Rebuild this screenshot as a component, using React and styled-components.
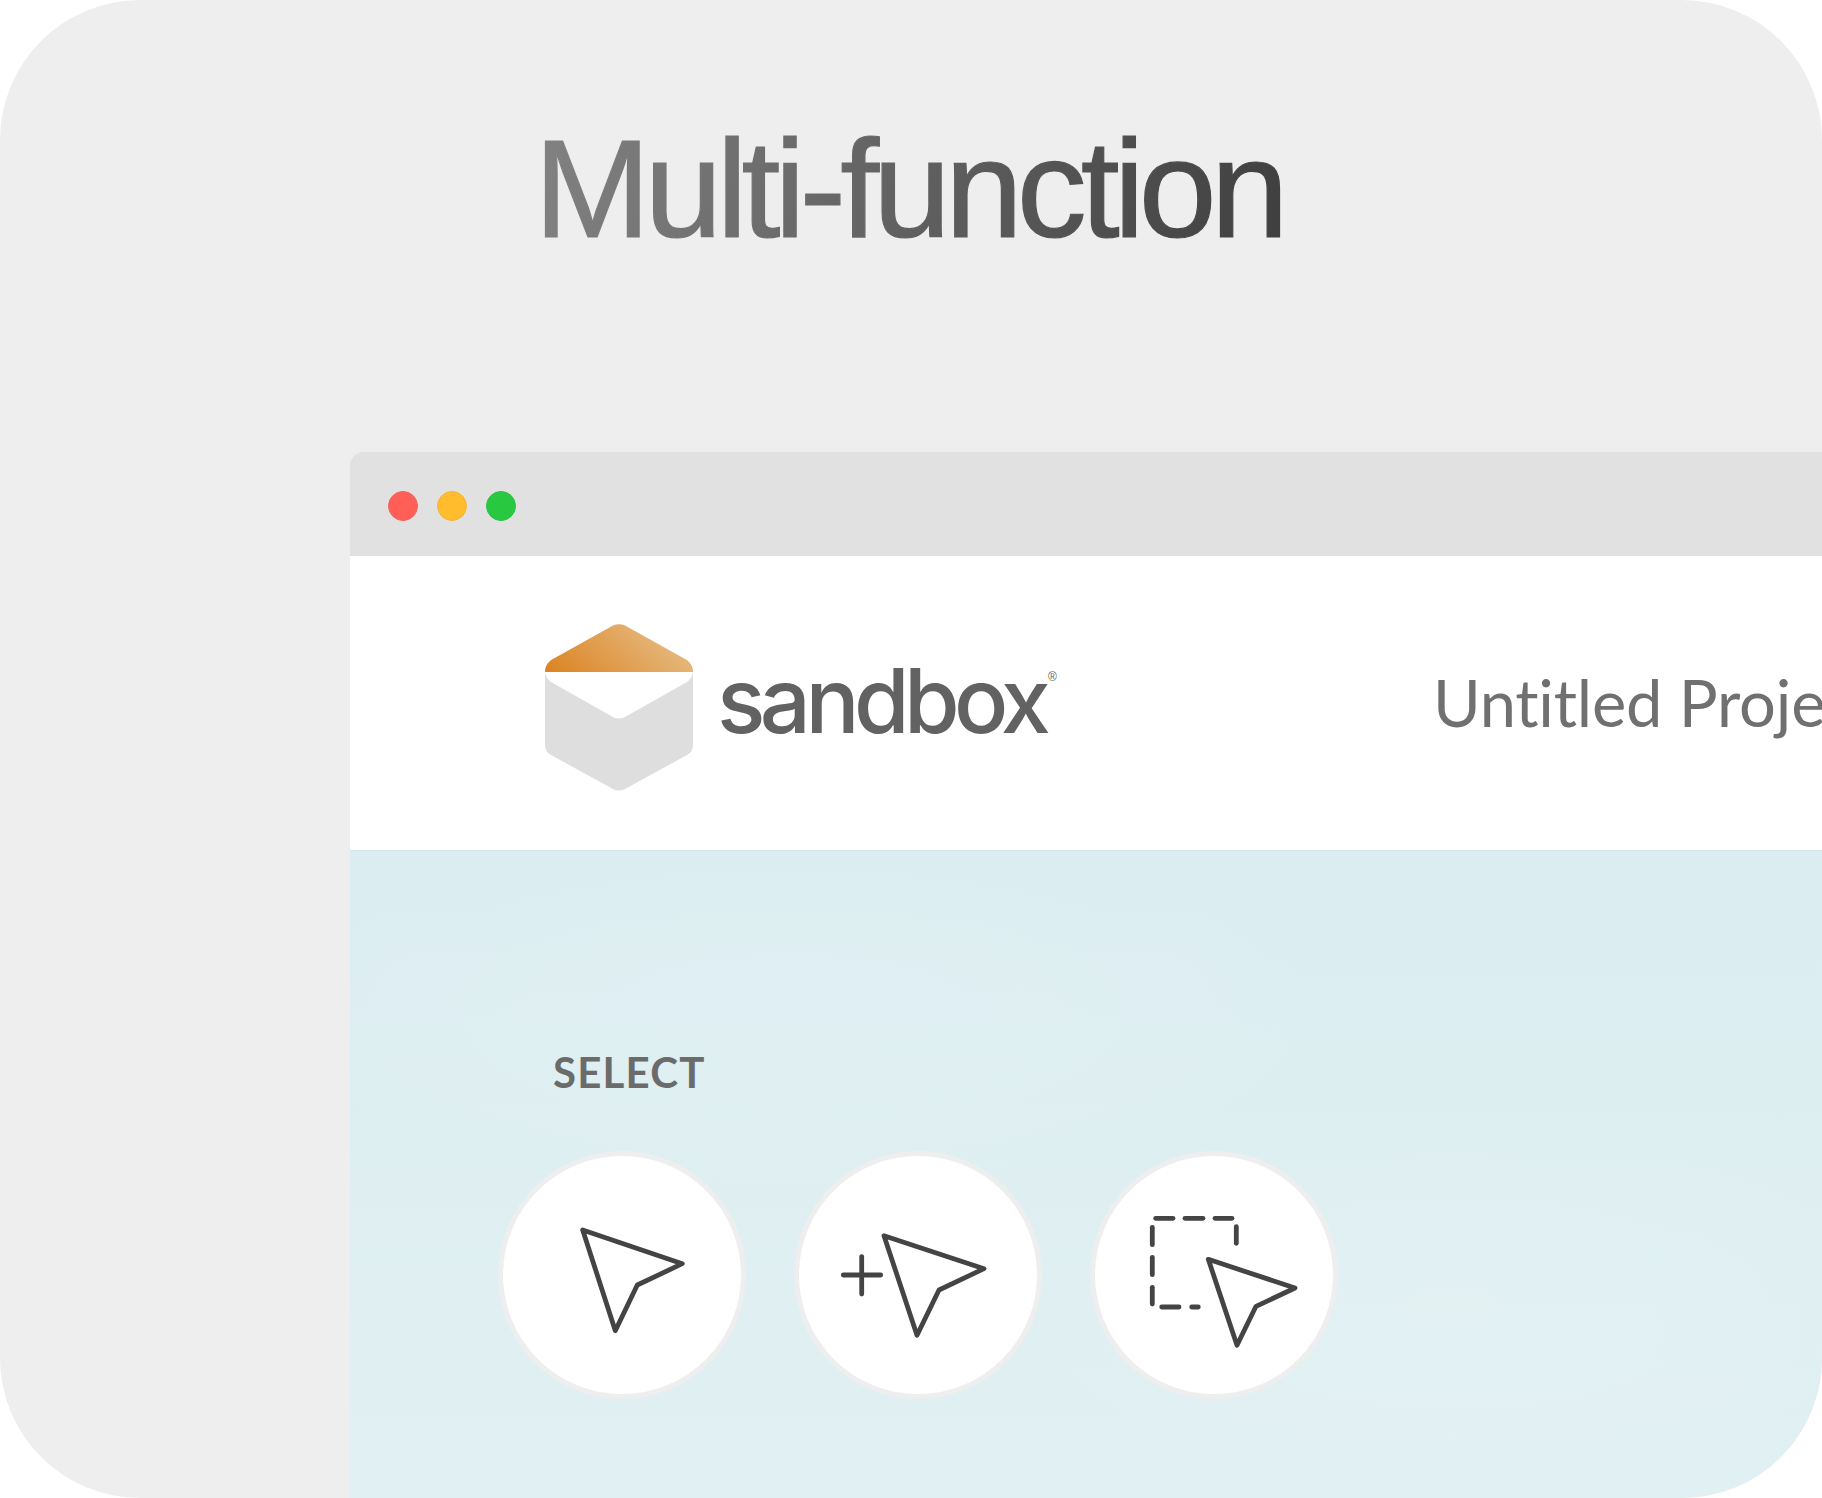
import React from "react";
import styled, { createGlobalStyle } from "styled-components";

const Global = createGlobalStyle`
  html, body { margin: 0; padding: 0; background: #fff; }
  #root { width: 1822px; height: 1498px; }
`;

const Card = styled.main`
  box-sizing: border-box;
  width: 1822px;
  height: 1498px;
  padding-top: 117px;
  background: #eeeeee;
  border-radius: 140px;
  overflow: hidden;
  display: flex;
  flex-direction: column;
`;

const Title = styled.h1`
  margin: 0 0 191px 534px;
  align-self: flex-start;
  font: 400 140px/144px "Liberation Sans", Arial, sans-serif;
  letter-spacing: -6px;
  white-space: nowrap;
  background: linear-gradient(100deg, #828282 0%, #3f3f3f 100%);
  -webkit-background-clip: text;
  background-clip: text;
  color: transparent;
  -webkit-text-stroke: 1.2px transparent;
`;

const Win = styled.section`
  margin-left: 350px;
  flex: 1;
  min-height: 0;
  display: flex;
  flex-direction: column;
  border-top-left-radius: 14px;
  overflow: hidden;
`;

const TitleBar = styled.div`
  box-sizing: border-box;
  height: 104px;
  flex: none;
  padding: 3px 0 0 38px;
  display: flex;
  align-items: center;
  gap: 19px;
  background: #e1e1e1;
`;

const Dot = styled.span`
  box-sizing: border-box;
  width: 30px;
  height: 30px;
  border-radius: 50%;
  background: ${(p) => p.$c};
  border: 1px solid ${(p) => p.$b};
`;

const Header = styled.header`
  box-sizing: border-box;
  height: 295px;
  flex: none;
  padding: 68px 0 0 195px;
  display: flex;
  align-items: flex-start;
  background: #fff;
  border-bottom: 1px solid #d6e6e9;
  white-space: nowrap;
`;

const Logo = styled.svg`
  display: block;
  flex: none;
  width: 148px;
  height: 167px;
`;

const Word = styled.div`
  position: relative;
  flex: none;
  width: 340px;
  margin: 25px 0 0 24px;
  font: 500 90px/104px Inter, "Liberation Sans", sans-serif;
  letter-spacing: -5.6px;
  color: #626262;
`;

const Reg = styled.span`
  position: absolute;
  left: 331px;
  top: 22px;
  font: 400 12px/12px "Liberation Sans", Arial, sans-serif;
  letter-spacing: 0;
`;

const Project = styled.div`
  flex: none;
  margin: 39px 0 0 376px;
  font: 400 65px/78px Lato, sans-serif;
  font-variant-ligatures: none;
  letter-spacing: -0.2px;
  color: #707070;
`;

const Body = styled.div`
  flex: 1;
  min-height: 0;
  padding: 196px 0 0 148px;
  background:
    radial-gradient(600px 200px at 30% 25%, rgba(255,255,255,.10), transparent),
    radial-gradient(500px 200px at 75% 70%, rgba(255,255,255,.10), transparent),
    linear-gradient(180deg, #dbedf1 0%, #e1f0f2 100%);
`;

const Label = styled.div`
  margin-left: 55px;
  font: 700 42px/50px Lato, sans-serif;
  letter-spacing: 1.2px;
  color: #6b6b6b;
`;

const Tools = styled.div`
  margin-top: 54px;
  display: flex;
  gap: 48px;
`;

const Tool = styled.div`
  box-sizing: border-box;
  width: 248px;
  height: 248px;
  border-radius: 50%;
  border: 5px solid #eeeeee;
  background: #fff;
  flex: none;
`;

const Glyph = styled.svg`
  display: block;
  width: 238px;
  height: 238px;
  fill: none;
  stroke: #444444;
  stroke-width: 4.8px;
  stroke-linecap: round;
  stroke-linejoin: round;
`;

const ICONS = [
  ["M83.7 78 183.3 111.7 138.3 133 116.3 178.7Z"],
  [
    "M89 83.7 189 116.7 144 138 122 183.3Z",
    "M48.3 123H85.7",
    "M66.7 104.7V142",
  ],
  [
    "M117.3 107.3 204 136 165 154.3 146 193.3Z",
    "M64.7 66.3H82",
    "M94 66.3H112",
    "M124 66.3H141",
    "M145.3 74.7V91.3",
    "M61.3 75.3V92.7",
    "M61.3 105.3V122.7",
    "M61.3 135.3V152",
    "M70.7 155H88",
    "M100.7 155H107.3",
  ],
];

export default function App() {
  return (
    <>
      <Global />
      <Card>
        <Title>Multi-function</Title>
        <Win>
          <TitleBar>
            <Dot $c="#ff5f57" $b="#f0625c" />
            <Dot $c="#ffbd2e" $b="#f2b634" />
            <Dot $c="#28c840" $b="#2dbf45" />
          </TitleBar>
          <Header>
            <Logo viewBox="0 0 148 167">
              <defs>
                <linearGradient id="roof" x1="0" y1="0.9" x2="1" y2="0.55">
                  <stop offset="0" stopColor="#dc8424" />
                  <stop offset="1" stopColor="#e6bb82" />
                </linearGradient>
              </defs>
              <path
                fill="url(#roof)"
                d="M0 48C0 42 3 38 7 35.500L68 1.500Q74-1 80 1.500L141 35.500C145 38 148 42 148 48Z"
              />
              <path
                fill="#dedede"
                d="M0 49C1 53 3 56 6 58L68 93Q74 96 80 93L142 58C145 56 147 53 148 49V121Q148 128 142 131L80 165Q74 168 68 165L6 131Q0 128 0 121Z"
              />
            </Logo>
            <Word>
              sandbox
              <Reg>®</Reg>
            </Word>
            <Project>Untitled Project</Project>
          </Header>
          <Body>
            <Label>SELECT</Label>
            <Tools>
              {ICONS.map((paths, i) => (
                <Tool key={i}>
                  <Glyph viewBox="4 4 238 238">
                    {paths.map((d) => (
                      <path key={d} d={d} />
                    ))}
                  </Glyph>
                </Tool>
              ))}
            </Tools>
          </Body>
        </Win>
      </Card>
    </>
  );
}
